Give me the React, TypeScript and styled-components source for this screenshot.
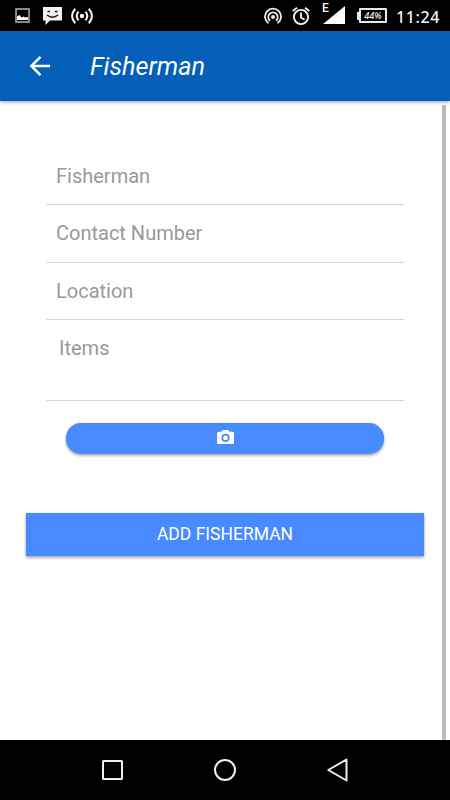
import React from "react";
import styled, { createGlobalStyle } from "styled-components";

const GlobalStyle = createGlobalStyle`
  * { box-sizing: border-box; }
  body { margin: 0; background: #fff; font-family: Roboto, "Noto Sans", sans-serif; }
  svg { display: block; flex: none; }
`;

const Screen = styled.div`
  width: 450px;
  height: 800px;
  display: flex;
  flex-direction: column;
  overflow: hidden;
  background: #fff;
`;

const StatusBar = styled.div`
  height: 31px;
  flex: none;
  display: flex;
  align-items: center;
  justify-content: space-between;
  padding: 0 10px 0 15px;
  background: #000;
  color: #f4f4f4;
`;

const Notifications = styled.div`
  display: flex;
  align-items: center;
  gap: 9px;

  > :first-child {
    margin-right: 4px;
  }
`;

const SystemIcons = styled.div`
  display: flex;
  align-items: center;
  gap: 10px;
`;

const Battery = styled.div`
  width: 30px;
  height: 15px;
  display: flex;
  align-items: center;
  margin: 0 0 0 2px;
`;

const BatteryTip = styled.div`
  width: 2px;
  height: 8px;
  background: #e8e8e8;
`;

const BatteryCase = styled.div`
  width: 28px;
  height: 15px;
  display: flex;
  align-items: center;
  justify-content: center;
  border: 2px solid #e8e8e8;
  border-radius: 1px;
  font: italic 500 9px/11px "Noto Sans", sans-serif;
`;

const Clock = styled.div`
  width: 44px;
  margin: 2px 0 0 -1px;
  font: 500 16px/20px "Noto Sans", sans-serif;
  letter-spacing: 0.6px;
  white-space: nowrap;
`;

const Header = styled.header`
  height: 70px;
  flex: none;
  display: flex;
  align-items: center;
  padding-left: 29px;
  background: #035fb8;
  box-shadow: 0 1px 4px rgba(0, 0, 0, 0.4);
`;

const BackButton = styled.button`
  width: 22px;
  height: 22px;
  padding: 0;
  border: 0;
  background: none;
`;

const Title = styled.h1`
  margin: 0 0 0 39px;
  padding-top: 1px;
  color: #fff;
  font: italic 400 25.2px/29px Roboto, sans-serif;
`;

const Content = styled.main`
  flex: 1;
  display: flex;
  padding-top: 4px;
  min-height: 0;
`;

const Form = styled.form`
  flex: 1;
  display: flex;
  flex-direction: column;
  padding: 42.5px 0 0 26px;
`;

const ScrollThumb = styled.div`
  width: 4px;
  flex: none;
  margin: 0 4px 0 18px;
  background: #bcbcbc;
`;

const Field = styled.label<{ $tall?: boolean }>`
  height: ${(p) => (p.$tall ? 81 : 57.5)}px;
  flex: none;
  margin: 0 20px;
  padding: 15px 0 0 ${(p) => (p.$tall ? 13 : 10)}px;
  border-bottom: 1px solid #d4d4d4;
  color: #999;
  font: 400 20px/26px Roboto, sans-serif;
`;

const Button = styled.button<{ $round?: boolean }>`
  display: flex;
  align-items: center;
  justify-content: center;
  flex: none;
  height: ${(p) => (p.$round ? 31 : 43)}px;
  margin: ${(p) => (p.$round ? "21.5px 40px 0" : "59.5px 0 0")};
  padding: 0 0 2px;
  border: 0;
  border-radius: ${(p) => (p.$round ? 15 : 0)}px;
  background: #488aff;
  color: #fff;
  font: 400 17.5px/20px Roboto, sans-serif;
  box-shadow: 0 2px 3px rgba(0, 0, 0, 0.3), 0 0 2px rgba(0, 0, 0, 0.15);
`;

const NavBar = styled.nav`
  height: 60px;
  flex: none;
  display: flex;
  align-items: center;
  justify-content: center;
  gap: 89px;
  background: #000;
`;

const PictureIcon = () => (
  <svg width="15" height="15" viewBox="0 0 15 15">
    <rect x="1" y="1" width="13" height="13" fill="none" stroke="#b5b5b5" strokeWidth="1.5" />
    <path d="M2 12V8.500L4.500 7l2 2.500 2-1 2 1 2.500-.5v3z" fill="#fff" />
  </svg>
);

const MessageIcon = () => (
  <svg width="19" height="18" viewBox="0 0 19 18">
    <path d="M0 0h19v13.500H7L2.500 18v-4.500H0z" fill="#f2f2f2" />
    <path d="M4.500 4.500h2.500M12 4.500h2.500M4 8q5.500 4.500 11 0" fill="none" stroke="#111" strokeWidth="1.5" />
  </svg>
);

const BroadcastIcon = () => (
  <svg width="22" height="18" viewBox="0 0 22 18" fill="none" stroke="#eee" strokeWidth="2.1">
    <circle cx="11" cy="9" r="2.3" fill="#eee" stroke="none" />
    <path d="M7.500 4.700q-3.600 4.300 0 8.600M14.500 4.700q3.600 4.300 0 8.600M4.200 1.800q-6.200 7.200 0 14.400M17.800 1.800q6.200 7.200 0 14.400" />
  </svg>
);

const HotspotIcon = () => (
  <svg width="18" height="18" viewBox="0 0 18 18" fill="none" stroke="#eee" strokeWidth="1.8">
    <circle cx="9" cy="10" r="2" fill="#eee" stroke="none" />
    <path d="M4.500 16.200A8 8 0 1 1 13.500 16.200M6 13.700A4.700 4.700 0 1 1 12 13.700" />
  </svg>
);

const AlarmIcon = () => (
  <svg width="18" height="18" viewBox="0 0 18 18" fill="none" stroke="#eee" strokeWidth="1.9">
    <circle cx="9" cy="10" r="7.1" />
    <path d="M.7 4.100L5 .8M17.300 4.100L13 .8M9 5.500v5l3.600 2.200" />
  </svg>
);

const Signal = styled.div`
  position: relative;
  width: 22px;
  height: 18px;
  margin: -2px 0 0 3px;
`;

const NetworkType = styled.span`
  position: absolute;
  left: -1px;
  top: -4px;
  font: 500 12px/12px Roboto, sans-serif;
`;

export default function App() {
  return (
    <>
      <GlobalStyle />
      <Screen>
        <StatusBar>
          <Notifications>
            <PictureIcon />
            <MessageIcon />
            <BroadcastIcon />
          </Notifications>
          <SystemIcons>
            <HotspotIcon />
            <AlarmIcon />
            <Signal>
              <NetworkType>E</NetworkType>
              <svg width="22" height="18" viewBox="0 0 22 18">
                <path d="M22 0v18H0z" fill="#fff" />
              </svg>
            </Signal>
            <Battery>
              <BatteryTip />
              <BatteryCase>44%</BatteryCase>
            </Battery>
            <Clock>11:24</Clock>
          </SystemIcons>
        </StatusBar>
        <Header>
          <BackButton type="button" aria-label="Back">
            <svg width="22" height="22" viewBox="0 0 22 22" fill="none" stroke="#fff" strokeWidth="2.5">
              <path d="M21 11H3M11.500 1.800L2.300 11l9.200 9.200" />
            </svg>
          </BackButton>
          <Title>Fisherman</Title>
        </Header>
        <Content>
          <Form>
            <Field>Fisherman</Field>
            <Field>Contact Number</Field>
            <Field>Location</Field>
            <Field $tall>Items</Field>
            <Button type="button" $round aria-label="Take photo">
              <svg width="17" height="15" viewBox="0 0 17 15">
                <path d="M5.800 0h5.400l1.500 1.700H15.500Q17 1.700 17 3.200v9.300Q17 14 15.500 14h-14Q0 14 0 12.500V3.200Q0 1.700 1.500 1.700H4.300z" fill="#fff" />
                <circle cx="8.5" cy="7.9" r="3.2" fill="none" stroke="#488aff" strokeWidth="1.7" />
              </svg>
            </Button>
            <Button type="button">ADD FISHERMAN</Button>
          </Form>
          <ScrollThumb />
        </Content>
        <NavBar>
          <svg width="24" height="24" viewBox="0 0 24 24" fill="none" stroke="#eee" strokeWidth="2">
            <rect x="3" y="3" width="19" height="18" rx=".5" />
          </svg>
          <svg width="24" height="24" viewBox="0 0 24 24" fill="none" stroke="#eee" strokeWidth="2">
            <circle cx="12" cy="12" r="10" />
          </svg>
          <svg width="24" height="24" viewBox="0 0 24 24" fill="none" stroke="#eee" strokeWidth="2" strokeLinejoin="round">
            <path d="M20.500 1.500v21L2.300 12z" />
          </svg>
        </NavBar>
      </Screen>
    </>
  );
}
